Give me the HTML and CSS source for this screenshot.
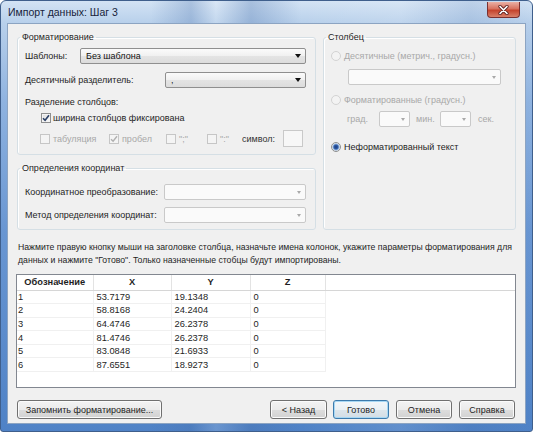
FILE: index.html
```html
<!DOCTYPE html>
<html lang="ru">
<head>
<meta charset="utf-8">
<title>Импорт данных: Шаг 3</title>
<link rel="stylesheet" href="styles.css">
</head>
<body>
<div class="window">
  <div class="titlebar">
    <span class="title">Импорт данных: Шаг 3</span>
    <div class="close">
      <svg width="11" height="10" viewBox="0 0 11 10"><path d="M2 1.5 L9 8.5 M9 1.5 L2 8.5" stroke="#5a1f1f" stroke-width="3.2" stroke-linecap="round"/><path d="M2 1.5 L9 8.5 M9 1.5 L2 8.5" stroke="#ffffff" stroke-width="1.7" stroke-linecap="round"/></svg>
    </div>
  </div>
  <div class="client">
    <div class="top">
      <fieldset class="grp fmt">
        <legend>Форматирование</legend>
        <div class="row r1"><span>Шаблоны:</span><div class="sel w-tpl"><span class="val">Без шаблона</span><span class="arr"></span></div></div>
        <div class="row r2"><span>Десятичный разделитель:</span><div class="sel w-dec"><span class="val">,</span><span class="arr"></span></div></div>
        <div class="line r3">Разделение столбцов:</div>
        <div class="line r4"><span class="chk on"><svg width="8" height="8" viewBox="0 0 8 8"><path d="M1 4.2 L3.1 6.3 L7 1.3" fill="none" stroke="#2a3f66" stroke-width="1.6"/></svg></span><span>ширина столбцов фиксирована</span></div>
        <div class="row r5">
          <span class="opt o1"><span class="chk dis"></span><span class="dim">табуляция</span></span>
          <span class="opt o2"><span class="chk dis"><svg width="8" height="8" viewBox="0 0 8 8"><path d="M1 4.2 L3.1 6.3 L7 1.3" fill="none" stroke="#b0b0b0" stroke-width="1.4"/></svg></span><span class="dim">пробел</span></span>
          <span class="opt o3"><span class="chk dis"></span><span class="dim">";"</span></span>
          <span class="opt o4"><span class="chk dis"></span><span class="dim">":"</span></span>
          <span class="opt o5">символ:</span>
          <span class="symbox"></span>
        </div>
      </fieldset>
      <fieldset class="grp col">
        <legend>Столбец</legend>
        <div class="line c1"><span class="rad dis"></span><span class="dim">Десятичные (метрич., градусн.)</span></div>
        <div class="sel off w-deg"><span class="val"></span><span class="arr"></span></div>
        <div class="line c2"><span class="rad dis"></span><span class="dim">Форматированные (градусн.)</span></div>
        <div class="row c3">
          <span class="dim u1">град.</span><div class="sel off w-sm"><span class="val"></span><span class="arr"></span></div>
          <span class="dim u2">мин.</span><div class="sel off w-sm"><span class="val"></span><span class="arr"></span></div>
          <span class="dim u3">сек.</span>
        </div>
        <div class="line c4"><span class="rad on"></span><span>Неформатированный текст</span></div>
      </fieldset>
      <fieldset class="grp coord">
        <legend>Определения координат</legend>
        <div class="row k1"><span>Координатное преобразование:</span><div class="sel off w-crd"><span class="val"></span><span class="arr"></span></div></div>
        <div class="row k2"><span>Метод определения координат:</span><div class="sel off w-crd"><span class="val"></span><span class="arr"></span></div></div>
      </fieldset>
    </div>
    <p class="hint">Нажмите правую кнопку мыши на заголовке столбца, назначьте имена колонок, укажите параметры форматирования для<br>данных и нажмите "Готово". Только назначенные стобцы будут импортированы.</p>
    <div class="grid">
      <table>
        <colgroup><col class="k-a"><col class="k-b"><col class="k-c"><col class="k-d"><col></colgroup>
        <thead><tr><th>Обозначение</th><th>X</th><th>Y</th><th>Z</th><th class="rest"></th></tr></thead>
        <tbody>
          <tr><td>1</td><td>53.7179</td><td>19.1348</td><td>0</td><td class="rest"></td></tr>
          <tr><td>2</td><td>58.8168</td><td>24.2404</td><td>0</td><td class="rest"></td></tr>
          <tr><td>3</td><td>64.4746</td><td>26.2378</td><td>0</td><td class="rest"></td></tr>
          <tr><td>4</td><td>81.4746</td><td>26.2378</td><td>0</td><td class="rest"></td></tr>
          <tr><td>5</td><td>83.0848</td><td>21.6933</td><td>0</td><td class="rest"></td></tr>
          <tr><td>6</td><td>87.6551</td><td>18.9273</td><td>0</td><td class="rest"></td></tr>
        </tbody>
      </table>
    </div>
    <div class="buttons">
      <div class="btn b-save">Запомнить форматирование...</div>
      <div class="btn b-back">&lt; Назад</div>
      <div class="btn def">Готово</div>
      <div class="btn">Отмена</div>
      <div class="btn">Справка</div>
    </div>
  </div>
</div>
</body>
</html>
```
FILE: styles.css
```css
* { box-sizing: border-box; }
body {
  margin: 0;
  font-family: "Liberation Sans", Arial, sans-serif;
  font-size: 9px;
  color: #1e1e1e;
  background: #ffffff;
  white-space: nowrap;
}
.window {
  width: 533px;
  height: 432px;
  border: 1px solid #3f5f8c;
  border-radius: 6px 6px 3px 3px;
  overflow: hidden;
  display: flex;
  flex-direction: column;
  background:
    linear-gradient(90deg, rgba(255,255,255,0) 0, rgba(255,255,255,0) 150px, rgba(70,110,170,0.28) 190px, rgba(255,255,255,0.15) 215px, rgba(70,110,170,0.3) 250px, rgba(255,255,255,0) 300px, rgba(255,255,255,0.1) 400px, rgba(70,110,170,0.15) 470px, rgba(255,255,255,0) 533px),
    linear-gradient(180deg, #d3e3f4 0, #b8d0eb 22px, #8fb3e0 100px, #6996d2 230px, #4f82c6 432px);
}
.titlebar {
  height: 22px;
  display: flex;
  justify-content: space-between;
  align-items: flex-start;
  padding: 0 12px 0 7px;
}
.title {
  font-size: 10.5px;
  line-height: 22px;
  color: #17233a;
}
.close {
  width: 33px;
  height: 16px;
  margin-top: 1px;
  border: 1px solid #7a3030;
  border-top: none;
  border-radius: 0 0 4px 4px;
  background: linear-gradient(180deg, #eab0a4 0, #d8725f 45%, #c5432c 55%, #d8806a 100%);
  display: flex;
  align-items: center;
  justify-content: center;
}
.client {
  flex: 1;
  margin: 0 6px 7px 6px;
  background: #f0f0f0;
  border: 1px solid #8ca4c2;
  padding: 7px 9px 0 9px;
  display: flex;
  flex-direction: column;
}
.top {
  display: grid;
  grid-template-columns: 299px 193px;
  grid-template-rows: 124px 68px;
  column-gap: 7px;
  row-gap: 7px;
}
.grp {
  margin: 0;
  padding: 0 9px 0 7px;
  border: 1px solid #d5dfe5;
  border-radius: 3px;
  min-width: 0;
  box-shadow: inset 1px 1px 0 #ffffff;
}
.grp legend {
  padding: 0 2px;
  margin-left: -5px;
  line-height: 12px;
}
.fmt { grid-column: 1; grid-row: 1; }
.col { grid-column: 2; grid-row: 1 / span 2; }
.coord { grid-column: 1; grid-row: 2; }

.row { display: flex; align-items: center; height: 16px; }
.line { display: flex; align-items: center; height: 12px; }

.sel {
  height: 16px;
  border: 1px solid #8f8f8f;
  border-radius: 2px;
  background: linear-gradient(180deg, #fbfbfb 0, #f0f0f0 50%, #e4e4e4 51%, #dcdcdc 100%);
  display: flex;
  align-items: center;
  padding-left: 5px;
}
.sel .val { flex: 1; color: #111; }
.sel .arr {
  width: 0; height: 0;
  margin-right: 4px;
  border-left: 3px solid transparent;
  border-right: 3px solid transparent;
  border-top: 4px solid #111;
}
.sel.off {
  border-color: #c9c9c9;
  background: #fafafa;
}
.sel.off .arr { border-top-color: #a9a9a9; border-left-width: 2.5px; border-right-width: 2.5px; border-top-width: 3px; }

.r1 { margin-top: 5px; }
.w-tpl { width: 226px; margin-left: auto; }
.r2 { margin-top: 8px; }
.w-dec { width: 141px; margin-left: auto; }
.r3 { margin-top: 8px; }
.r4 { margin-top: 4px; padding-left: 16px; gap: 2px; }
.r5 { margin-top: 6px; height: 17px; padding-left: 15px; }
.opt { display: flex; align-items: center; gap: 3px; }
.o1 { width: 69px; }
.o2 { width: 57px; }
.o3 { width: 41px; }
.o4 { width: 35px; }
.o5 { width: 41px; color: #333; }
.symbox {
  width: 20px; height: 17px;
  border: 1px solid #c9c9c9;
  background: #f7f7f7;
}
.dim { color: #a8a8a8; }

.chk {
  width: 10px; height: 10px;
  border: 1px solid #8e8f8f;
  background: linear-gradient(135deg, #dcdcdc, #fbfbfb);
  box-shadow: inset 0 0 0 1px #f4f4f4;
  display: inline-flex;
  align-items: center;
  justify-content: center;
  flex: none;
}
.chk.dis { border-color: #c6c6c6; background: #f4f4f4; box-shadow: none; }

.rad {
  width: 10px; height: 10px;
  border-radius: 50%;
  border: 1px solid #8e8f8f;
  background: radial-gradient(circle, #fdfdfd 0, #e2e2e2 100%);
  margin-right: 3px;
  flex: none;
}
.rad.dis { border-color: #d3d3d3; background: #f3f3f3; }
.rad.on { background: radial-gradient(circle, #1c3e7c 0, #2d5aa8 2px, #8fb1dc 3px, #f2f2f2 4px); }

.c1 { margin-top: 7px; }
.w-deg { width: 153px; margin-top: 7px; margin-left: 17px; }
.c2 { margin-top: 9px; }
.c3 { margin-top: 5px; padding-left: 16px; }
.u1 { width: 32px; }
.u2 { width: 24px; margin-left: 6px; }
.u3 { margin-left: 7px; }
.w-sm { width: 31px; }
.c4 { margin-top: 14px; }

.k1 { margin-top: 10px; }
.k2 { margin-top: 7px; }
.w-crd { width: 142px; margin-left: auto; }

.hint {
  margin: 11px 0 0 0;
  padding-left: 1px;
  font-size: 8.7px;
  line-height: 13px;
  color: #1e1e1e;
}
.grid {
  margin-top: 7px;
  margin-left: -1px;
  width: 500px;
  height: 114px;
  border: 1px solid #828790;
  background: #ffffff;
}
table {
  border-collapse: collapse;
  table-layout: fixed;
  width: 100%;
  font-size: 9.3px;
}
.k-a { width: 76px; }
.k-b { width: 78px; }
.k-c { width: 79px; }
.k-d { width: 75px; }
th {
  height: 15px;
  padding: 0;
  font-weight: bold;
  text-align: center;
  border-right: 1px solid #e3e3e3;
  border-bottom: 1px solid #d6d6d6;
}
th.rest { border-right: none; }
td {
  height: 13.6px;
  padding: 0 3px;
  text-align: left;
  border-right: 1px solid #f0f0f0;
  border-bottom: 1px solid #f0f0f0;
}
td:first-child { padding-left: 1px; }
td.rest { border: none; }

.buttons {
  display: flex;
  margin-top: 12px;
  padding-right: 1px;
  gap: 7px;
}
.btn {
  width: 56px;
  height: 19px;
  border: 1px solid #707070;
  border-radius: 3px;
  background: linear-gradient(180deg, #f3f3f3 0, #ebebeb 50%, #dddddd 51%, #d2d2d2 100%);
  box-shadow: inset 0 0 0 1px #fbfbfb;
  display: flex;
  align-items: center;
  justify-content: center;
}
.b-save { width: 145px; margin-right: auto; }
.b-back { width: 57px; margin-right: -1px; }
.btn.def {
  border-color: #3d7bad;
  box-shadow: inset 0 0 0 1px #a8d8f4;
  background: linear-gradient(180deg, #f3f7fa 0, #eaf0f4 50%, #dde6ec 51%, #d3dde5 100%);
}
```
